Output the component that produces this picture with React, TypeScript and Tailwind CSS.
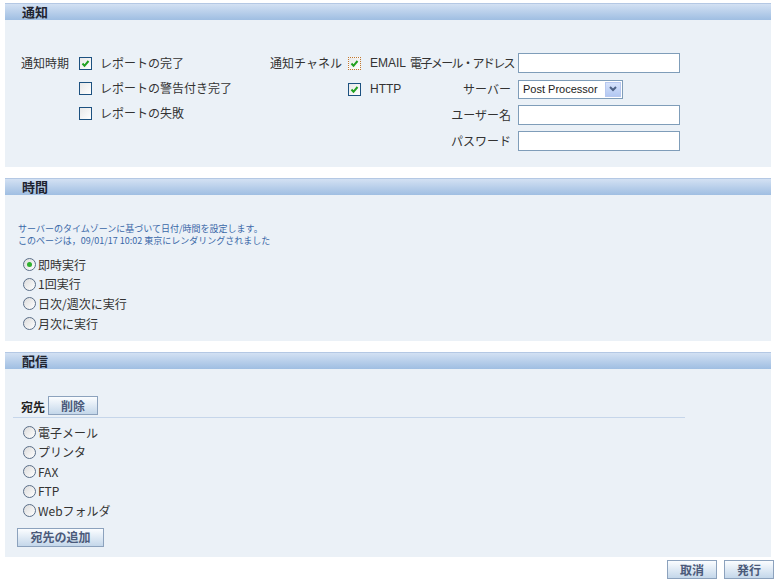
import React from 'react';

const jp = { fontFamily: '"Noto Sans CJK JP", "Liberation Sans", sans-serif' };
const latin = { fontFamily: '"Liberation Sans", sans-serif' };

const CheckBox: React.FC<{ checked?: boolean; focus?: boolean }> = ({ checked, focus }) => (
  <span
    className={`relative inline-flex h-[13px] w-[13px] shrink-0 items-center justify-center bg-gradient-to-br from-[#e8e8e8] to-[#ffffff] ${
      focus ? 'border border-dotted border-[#c07830]' : 'border border-[#1c5180]'
    }`}
  >
    {checked && (
      <svg width="9" height="9" viewBox="0 0 9 9">
        <path d="M1.5 4.5 L3.5 6.8 L7.5 2" fill="none" stroke="#21a121" strokeWidth="2" />
      </svg>
    )}
  </span>
);

const Radio: React.FC<{ checked?: boolean }> = ({ checked }) => (
  <span className="inline-flex h-[13px] w-[13px] shrink-0 items-center justify-center rounded-full border border-[#5a6e88] bg-gradient-to-br from-[#dcdcdc] to-[#ffffff]">
    {checked && <span className="h-[5px] w-[5px] rounded-full bg-[#2fb12f]" />}
  </span>
);

const Btn: React.FC<{ children: React.ReactNode; className?: string }> = ({ children, className = '' }) => (
  <button
    className={`h-[19px] border border-[#8ca2bd] bg-gradient-to-b from-[#fbfdff] to-[#c4d7ea] text-[12px] font-bold leading-none text-[#4b5a7a] ${className}`}
    style={jp}
  >
    {children}
  </button>
);

const Header: React.FC<{ title: string }> = ({ title }) => (
  <div className="h-[17px] border-t border-[#b4c8e4] bg-gradient-to-b from-[#d3e1f3] to-[#9fbee2] pl-[17px] text-[13px] font-bold leading-[16px] text-[#1f2430]" style={jp}>
    {title}
  </div>
);

const Input: React.FC<{ className?: string }> = ({ className = '' }) => (
  <div className={`h-[20px] w-[162px] border border-[#7f9db9] bg-white ${className}`} />
);

const Row: React.FC<{ children: React.ReactNode }> = ({ children }) => (
  <div className="flex h-[20px] items-center gap-[8px]">{children}</div>
);

export default function App() {
  return (
    <div className="min-h-[579px] w-[776px] bg-white pt-[3px] text-[12px] text-[#333]" style={jp}>
      {/* 通知 */}
      <div className="mx-[5px]">
        <Header title="通知" />
        <div className="flex h-[147px] bg-[#ebf1f7] pl-[16px] pt-[33px]">
          <div className="flex w-[249px]">
            <div className="w-[58px] pt-[1px] leading-[18px]">通知時期</div>
            <div className="flex flex-col gap-[5px]">
              <div className="flex h-[20px] items-center gap-[8px]">
                <CheckBox checked />
                <span>レポートの完了</span>
              </div>
              <div className="flex h-[20px] items-center gap-[8px]">
                <CheckBox />
                <span>レポートの警告付き完了</span>
              </div>
              <div className="flex h-[20px] items-center gap-[8px]">
                <CheckBox />
                <span>レポートの失敗</span>
              </div>
            </div>
          </div>
          <div className="flex">
            <div className="w-[78px] pt-[1px] leading-[18px]">通知チャネル</div>
            <div className="flex flex-col gap-[6px]">
              <Row>
                <CheckBox checked focus />
                <span className="ml-[1px] w-[32px]" style={latin}>EMAIL</span>
                <span className="w-[101px] whitespace-nowrap text-right tracking-[-1.6px]">電子メール・アドレス</span>
                <Input className="-ml-px" />
              </Row>
              <Row>
                <CheckBox checked />
                <span className="ml-[1px] w-[32px]" style={latin}>HTTP</span>
                <span className="w-[101px] text-right">サーバー</span>
                <div className="-ml-px flex h-[19px] w-[105px] items-center justify-between border border-[#7f9db9] bg-white pl-[4px] pr-px" style={latin}>
                  <span className="whitespace-nowrap text-[11px] text-[#222]">Post Processor</span>
                  <span className="flex h-[15px] w-[16px] items-center justify-center border border-[#b7c8f0] bg-gradient-to-b from-[#d6e2fb] to-[#b3c8f2]">
                    <svg width="8" height="6" viewBox="0 0 8 6">
                      <path d="M1 1 L4 4 L7 1" fill="none" stroke="#4d6185" strokeWidth="2" />
                    </svg>
                  </span>
                </div>
              </Row>
              <Row>
                <span className="w-[13px]" />
                <span className="ml-[1px] w-[32px]" />
                <span className="w-[101px] text-right">ユーザー名</span>
                <Input className="-ml-px" />
              </Row>
              <Row>
                <span className="w-[13px]" />
                <span className="ml-[1px] w-[32px]" />
                <span className="w-[101px] text-right">パスワード</span>
                <Input className="-ml-px" />
              </Row>
            </div>
          </div>
        </div>
      </div>

      <div className="h-[11px]" />

      {/* 時間 */}
      <div className="mx-[5px]">
        <Header title="時間" />
        <div className="h-[146px] bg-[#ebf1f7] pl-[13px] pt-[28px]">
          <div className="text-[9px] leading-[12px] text-[#3a68a8]">
            <div>サーバーのタイムゾーンに基づいて日付/時間を設定します。</div>
            <div>このページは，09/01/17 10:02 東京にレンダリングされました</div>
          </div>
          <div className="mt-[8px] flex flex-col pl-[5px]">
            {['即時実行', '1回実行', '日次/週次に実行', '月次に実行'].map((t, i) => (
              <div key={t} className="flex h-[19.6px] items-center gap-[2px]">
                <Radio checked={i === 0} />
                <span>{t}</span>
              </div>
            ))}
          </div>
        </div>
      </div>

      <div className="h-[11px]" />

      {/* 配信 */}
      <div className="mx-[5px]">
        <Header title="配信" />
        <div className="h-[188px] bg-[#ebf1f7] pl-[8px] pt-[27px]">
          <div className="flex items-end gap-[3px] pl-[8px]">
            <span className="text-[12px] font-bold leading-[16px] text-[#222]">宛先</span>
            <Btn className="w-[50px]">削除</Btn>
          </div>
          <div className="mt-[2px] h-px w-[672px] bg-[#c6d6ea]" />
          <div className="mt-[5px] flex flex-col pl-[10px]">
            {['電子メール', 'プリンタ', 'FAX', 'FTP', 'Webフォルダ'].map((t) => (
              <div key={t} className="flex h-[19.5px] items-center gap-[2px]">
                <Radio />
                <span>{t}</span>
              </div>
            ))}
          </div>
          <Btn className="mt-[7px] ml-[4px] w-[87px]">宛先の追加</Btn>
        </div>
      </div>

      <div className="mt-[3px] flex justify-end gap-[7px] pr-[2px]">
        <Btn className="w-[50px]">取消</Btn>
        <Btn className="w-[50px]">発行</Btn>
      </div>
    </div>
  );
}
